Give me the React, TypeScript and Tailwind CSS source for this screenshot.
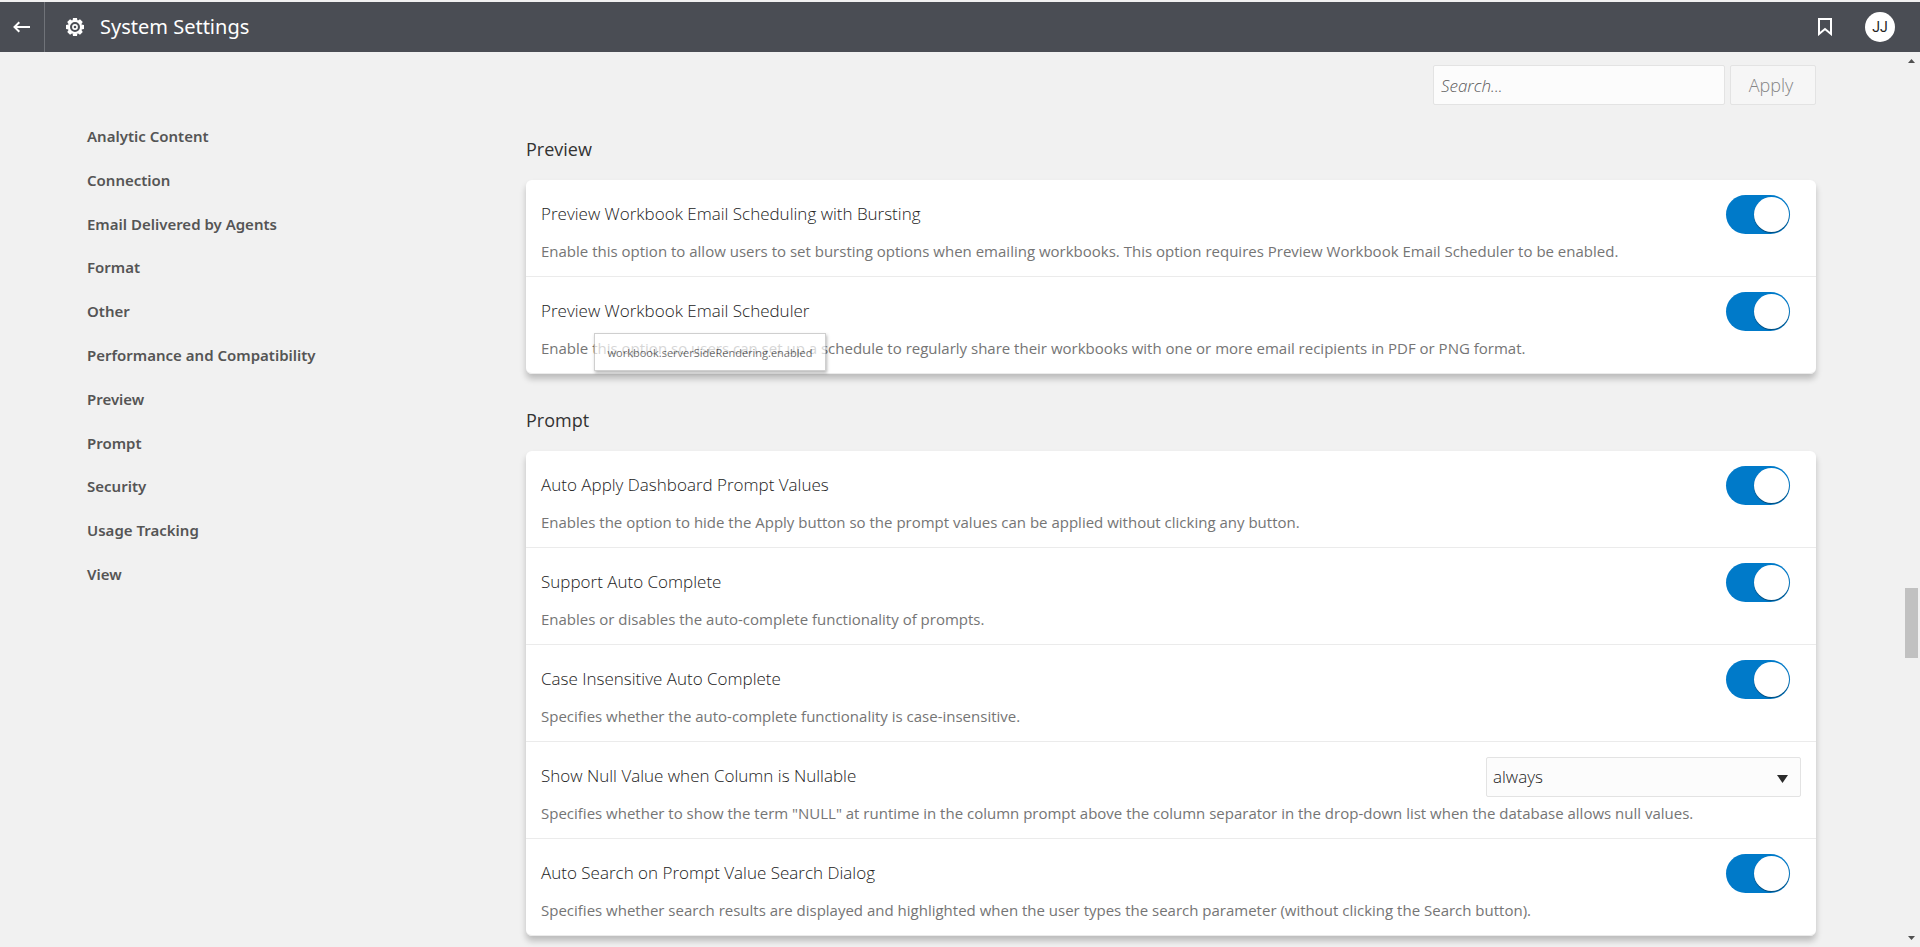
import { useState } from "react";

const categories = [
  "Analytic Content",
  "Connection",
  "Email Delivered by Agents",
  "Format",
  "Other",
  "Performance and Compatibility",
  "Preview",
  "Prompt",
  "Security",
  "Usage Tracking",
  "View",
];

type Setting = {
  id: string;
  title: string;
  description: string;
  options?: string[];
  tooltip?: string;
};

const groups: { name: string; settings: Setting[] }[] = [
  {
    name: "Preview",
    settings: [
      {
        id: "bursting",
        title: "Preview Workbook Email Scheduling with Bursting",
        description:
          "Enable this option to allow users to set bursting options when emailing workbooks. This option requires Preview Workbook Email Scheduler to be enabled.",
      },
      {
        id: "scheduler",
        title: "Preview Workbook Email Scheduler",
        description:
          "Enable this option so users can set up a schedule to regularly share their workbooks with one or more email recipients in PDF or PNG format.",
        tooltip: "workbook.serverSideRendering.enabled",
      },
    ],
  },
  {
    name: "Prompt",
    settings: [
      {
        id: "auto-apply",
        title: "Auto Apply Dashboard Prompt Values",
        description:
          "Enables the option to hide the Apply button so the prompt values can be applied without clicking any button.",
      },
      {
        id: "auto-complete",
        title: "Support Auto Complete",
        description: "Enables or disables the auto-complete functionality of prompts.",
      },
      {
        id: "case-insensitive",
        title: "Case Insensitive Auto Complete",
        description: "Specifies whether the auto-complete functionality is case-insensitive.",
      },
      {
        id: "null-value",
        title: "Show Null Value when Column is Nullable",
        description:
          'Specifies whether to show the term "NULL" at runtime in the column prompt above the column separator in the drop-down list when the database allows null values.',
        options: ["always", "never", "asDatabasePermits"],
      },
      {
        id: "auto-search",
        title: "Auto Search on Prompt Value Search Dialog",
        description:
          "Specifies whether search results are displayed and highlighted when the user types the search parameter (without clicking the Search button).",
      },
    ],
  },
];

function GearIcon() {
  const teeth = [0, 45, 90, 135, 180, 225, 270, 315];
  return (
    <svg viewBox="0 0 18 18" className="size-[18px]" fill="none" aria-hidden="true">
      <circle cx="9" cy="9" r="6.1" stroke="white" strokeWidth="2.2" />
      {teeth.map((angle) => (
        <path key={angle} d="M7 0h4l.4 2.600H6.600z" fill="white" transform={`rotate(${angle} 9 9)`} />
      ))}
      <circle cx="9" cy="9" r="2.1" stroke="white" strokeWidth="1.6" />
    </svg>
  );
}

function Header() {
  return (
    <header className="mt-0.5 flex h-[50px] shrink-0 items-center bg-[#4a4d54] text-white">
      <button type="button" aria-label="Back" className="flex h-full w-[45px] items-center border-r border-[#707379] pl-[13px]">
        <svg viewBox="0 0 17 12" className="h-3 w-[17px]" fill="none" stroke="white" strokeWidth="2" aria-hidden="true">
          <path d="M17 6H2M6.300 1.200L1.500 6l4.800 4.800" />
        </svg>
      </button>
      <span className="pl-[21px]">
        <GearIcon />
      </span>
      <h1 className="flex-1 pl-4 font-['Noto_Sans',sans-serif] text-[20px] leading-7">System Settings</h1>
      <button type="button" aria-label="Bookmarks" className="mr-[33px]">
        <svg viewBox="0 0 14 18" className="h-[18px] w-3.5" fill="none" stroke="white" strokeWidth="2" aria-hidden="true">
          <path d="M1 1h12v15l-6-5-6 5z" />
        </svg>
      </button>
      <button
        type="button"
        aria-label="Account JJ"
        className="mr-[25px] flex size-[30px] items-center justify-center rounded-full bg-white font-['Roboto',sans-serif] text-[14px] leading-5 text-[#222]"
      >
        JJ
      </button>
    </header>
  );
}

function Toggle({ id }: { id: string }) {
  const [on, setOn] = useState(true);
  return (
    <input
      id={id}
      type="checkbox"
      role="switch"
      checked={on}
      onChange={(e) => setOn(e.target.checked)}
      className="mr-[11px] flex h-[39px] w-16 shrink-0 cursor-pointer appearance-none items-center rounded-full bg-[#9a9a9a] px-px before:size-[35px] before:rounded-full before:bg-white before:shadow-[0_1px_1px_rgba(0,0,0,0.4)] before:content-[''] checked:justify-end checked:bg-[#007ac9]"
    />
  );
}

function Dropdown({ id, options }: { id: string; options: string[] }) {
  return (
    <div className="grid w-[315px] shrink-0 items-center">
      <select
        id={id}
        className="col-start-1 row-start-1 h-10 w-full appearance-none rounded-xs border border-[#e3e3e3] bg-[#fcfcfc] px-1.5 text-[17px] font-[350] text-[#222]"
      >
        {options.map((option) => (
          <option key={option}>{option}</option>
        ))}
      </select>
      <svg
        viewBox="0 0 11 8"
        className="pointer-events-none col-start-1 row-start-1 mt-1 mr-[13px] h-2 w-[11px] justify-self-end"
        aria-hidden="true"
      >
        <path d="M0 0h11L5.500 8z" fill="#2b2b2b" />
      </svg>
    </div>
  );
}

function SettingRow({ setting }: { setting: Setting }) {
  return (
    <li className="relative border-b border-[#ebebeb] bg-white px-[15px] pt-[15px] pb-[13px] first:rounded-t-md last:rounded-b-md">
      <div className="flex h-10 items-start justify-between">
        <label htmlFor={setting.id} className="pt-[7px] text-[17px] leading-6 font-[350] text-[#222]">
          {setting.title}
        </label>
        {setting.options ? <Dropdown id={setting.id} options={setting.options} /> : <Toggle id={setting.id} />}
      </div>
      <p className="pt-1 text-[15px] leading-6 text-[#757575]">{setting.description}</p>
      {setting.tooltip && (
        <div
          role="tooltip"
          className="absolute top-14 left-[68px] flex h-[38px] w-[232px] items-center justify-center border border-[#bbb] bg-white pt-0.5 text-[11px] leading-4 text-[#333] opacity-70 shadow-[1px_2px_3px_rgba(0,0,0,0.4)]"
        >
          {setting.tooltip}
        </div>
      )}
    </li>
  );
}

function Scrollbar() {
  return (
    <div aria-hidden="true" className="flex w-[17px] shrink-0 flex-col items-center bg-[#f1f1f1] py-[7px]">
      <svg viewBox="0 0 7 4" className="h-1 w-[7px]">
        <path d="M0 4l3.500-4L7 4z" fill="#505050" />
      </svg>
      <div className="flex-[525]" />
      <div className="h-[70px] w-[13px] bg-[#c1c1c1]" />
      <div className="flex-[278]" />
      <svg viewBox="0 0 7 4" className="h-1 w-[7px]">
        <path d="M0 0l3.500 4L7 0z" fill="#505050" />
      </svg>
    </div>
  );
}

export default function App() {
  return (
    <div className="flex h-screen flex-col overflow-hidden bg-[#f1f1f1] font-['Open_Sans','Noto_Sans',sans-serif]">
      <Header />
      <div className="flex min-h-0 flex-1">
        <div className="flex min-w-0 flex-1 flex-col overflow-hidden px-[87px] pt-[13px]">
          <form className="flex shrink-0 justify-end gap-[5px]" onSubmit={(e) => e.preventDefault()}>
            <input
              type="search"
              aria-label="Search settings"
              placeholder="Search..."
              className="h-10 w-[292px] rounded-xs border border-[#e3e3e3] bg-[#fcfcfc] px-[7px] text-[17px] font-[350] text-[#333] placeholder:text-[#5a5a5a] placeholder:italic"
            />
            <button
              type="submit"
              disabled
              className="h-10 w-[86px] rounded-xs border border-[#e3e3e3] bg-[#f6f6f6] pr-1 text-[18px] font-light text-[#858585]"
            >
              Apply
            </button>
          </form>
          <div className="flex min-h-0 flex-1">
            <nav className="w-[439px] shrink-0 pt-[19px]">
              <ul className="flex h-[462px] flex-col justify-between">
                {categories.map((name) => (
                  <li key={name} className="h-6">
                    <a
                      href={`#${name}`}
                      className="font-['Noto_Sans',sans-serif] text-[15px] leading-6 font-semibold text-[#555]"
                    >
                      {name}
                    </a>
                  </li>
                ))}
              </ul>
            </nav>
            <main className="flex min-w-0 flex-1 flex-col gap-8 pt-[30px]">
              {groups.map((group) => (
                <section key={group.name}>
                  <h2 className="pb-[17px] text-[18px] leading-7 text-[#333]">{group.name}</h2>
                  <ul className="rounded-md shadow-[0_5px_6px_rgba(0,0,0,0.22)]">
                    {group.settings.map((setting) => (
                      <SettingRow key={setting.id} setting={setting} />
                    ))}
                  </ul>
                </section>
              ))}
            </main>
          </div>
        </div>
        <Scrollbar />
      </div>
    </div>
  );
}
